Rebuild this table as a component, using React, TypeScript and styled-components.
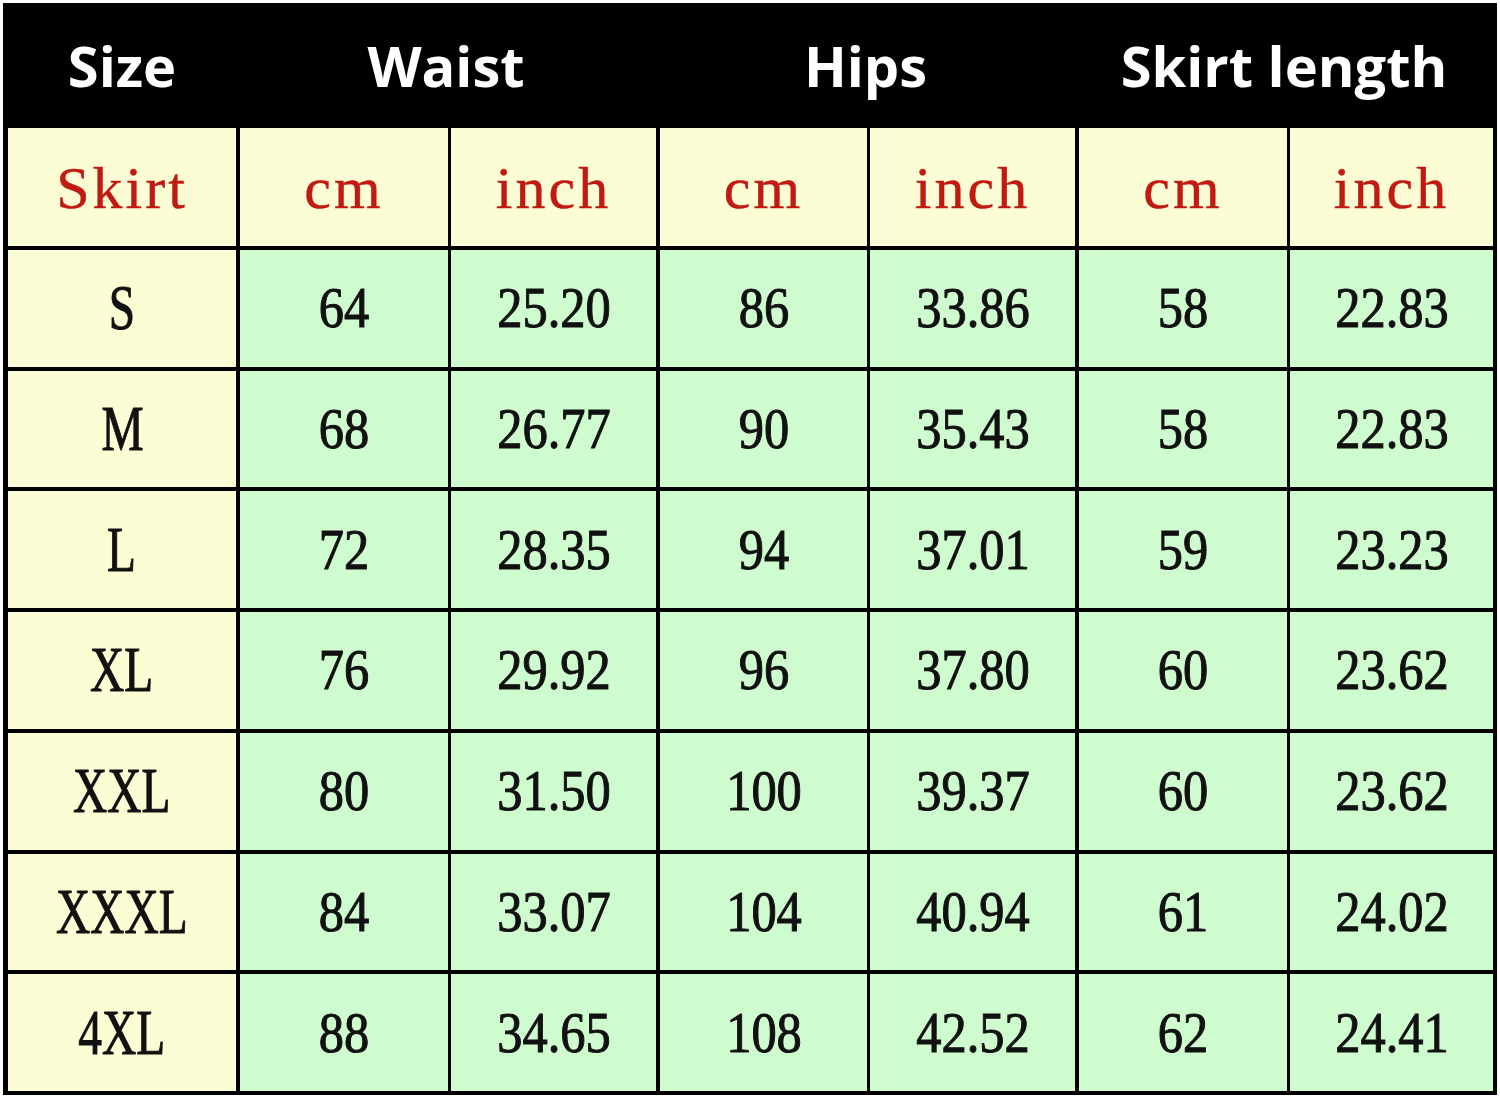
import styled, { createGlobalStyle } from "styled-components";

const GlobalStyle = createGlobalStyle`
  html, body {
    margin: 0;
    padding: 0;
    background: #ffffff;
  }
`;

type Sep = "none" | "thick" | "thin";

const rows = [
  { size: "S", values: ["64", "25.20", "86", "33.86", "58", "22.83"] },
  { size: "M", values: ["68", "26.77", "90", "35.43", "58", "22.83"] },
  { size: "L", values: ["72", "28.35", "94", "37.01", "59", "23.23"] },
  { size: "XL", values: ["76", "29.92", "96", "37.80", "60", "23.62"] },
  { size: "XXL", values: ["80", "31.50", "100", "39.37", "60", "23.62"] },
  { size: "XXXL", values: ["84", "33.07", "104", "40.94", "61", "24.02"] },
  { size: "4XL", values: ["88", "34.65", "108", "42.52", "62", "24.41"] },
];

const units = ["cm", "inch", "cm", "inch", "cm", "inch"];

// separator before each column (index 0 is the size column)
const seps: Sep[] = ["none", "thick", "thin", "thick", "thin", "thick", "thin"];

const App = () => {
  return (
    <>
      <GlobalStyle />
      <Chart>
        <HeadCell $span={1}>Size</HeadCell>
        <HeadCell $span={2}>Waist</HeadCell>
        <HeadCell $span={2}>Hips</HeadCell>
        <HeadCell $span={2}>Skirt length</HeadCell>

        <UnitCell $sep="none">Skirt</UnitCell>
        {units.map((u, i) => (
          <UnitCell key={i} $sep={seps[i + 1]}>
            {u}
          </UnitCell>
        ))}

        {rows.map((row) => (
          <Row key={row.size}>
            <SizeCell $sep="none">
              <SizeLabel>{row.size}</SizeLabel>
            </SizeCell>
            {row.values.map((v, i) => (
              <ValueCell key={i} $sep={seps[i + 1]}>
                <ValueText>{v}</ValueText>
              </ValueCell>
            ))}
          </Row>
        ))}
      </Chart>
    </>
  );
};

const Chart = styled.div`
  margin: 3px 3px 0 3px;
  height: 1092px;
  box-sizing: border-box;
  padding: 0 4px 4px 5px;
  background: #000;
  display: grid;
  grid-template-columns: 228px 212px 208px 211px 208px 212px 206px;
  grid-template-rows: 125px 118px repeat(7, 1fr);
`;

const Row = styled.div`
  display: contents;
`;

const HeadCell = styled.div<{ $span: number }>`
  grid-column: span ${(p) => p.$span};
  display: flex;
  align-items: center;
  justify-content: center;
  padding-bottom: 2px;
  color: #ffffff;
  font-family: "Open Sans", "Noto Sans", sans-serif;
  font-weight: 700;
  font-size: 56px;
`;

const Cell = styled.div<{ $sep: Sep }>`
  box-sizing: border-box;
  display: flex;
  align-items: center;
  justify-content: center;
  border-left: ${(p) =>
    p.$sep === "thick" ? "4px" : p.$sep === "thin" ? "3px" : "0"} solid #000;
`;

const UnitCell = styled(Cell)`
  background: #fdfdd5;
  color: #c01a12;
  font-family: "Liberation Serif", "Times New Roman", serif;
  font-size: 60px;
  letter-spacing: 3px;
  padding-top: 2px;
  -webkit-text-stroke: 0.4px #c01a12;
`;

const SizeCell = styled(Cell)`
  background: #fdfdd5;
  border-top: 4px solid #000;
`;

const SizeLabel = styled.span`
  display: inline-block;
  color: #111;
  font-family: "Liberation Serif", "Times New Roman", serif;
  font-size: 64px;
  transform: scaleX(0.74);
  -webkit-text-stroke: 1px #111;
`;

const ValueCell = styled(Cell)`
  background: #cffccf;
  border-top: 4px solid #000;
`;

const ValueText = styled.span`
  display: inline-block;
  color: #111;
  font-family: "Liberation Serif", "Times New Roman", serif;
  font-size: 56px;
  transform: scaleX(0.9);
  -webkit-text-stroke: 1px #111;
`;

export default App;
